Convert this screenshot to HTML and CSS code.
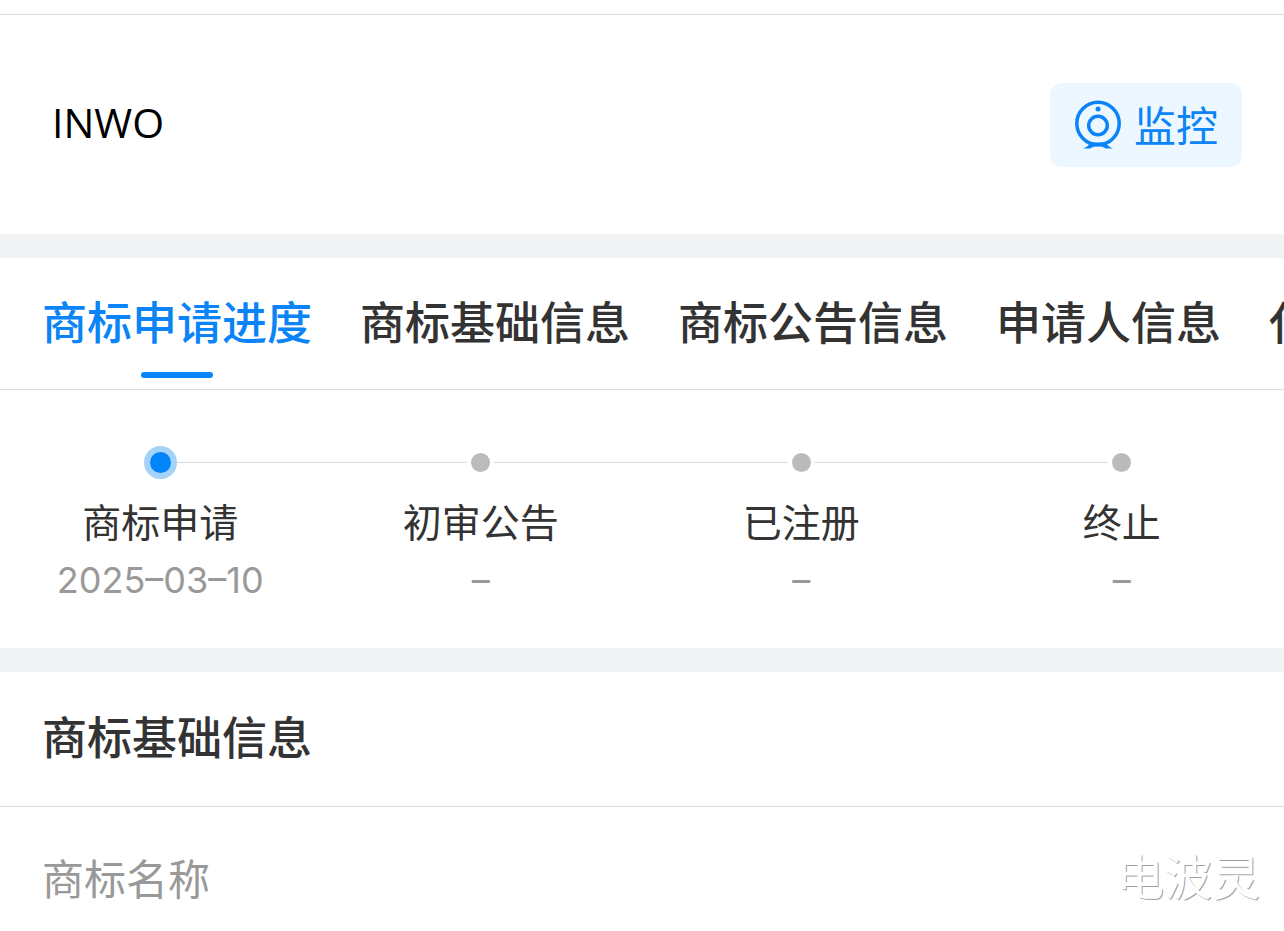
FILE: index.html
```html
<!DOCTYPE html>
<html lang="zh-CN">
<head>
    <meta charset="UTF-8">
    <meta name="viewport" content="width=device-width, initial-scale=1.0">
    <title>INWO</title>
    <link rel="stylesheet" href="styles.css">
</head>
<body>
<header class="brand">
    <h1 class="brand-name">INWO</h1>
    <button class="monitor-btn" type="button">
        <svg class="monitor-icon" viewBox="0 0 48 50" fill="none" stroke="currentColor" stroke-width="3.5" aria-hidden="true">
            <circle cx="24" cy="24.5" r="21.2"></circle>
            <circle cx="24" cy="26.5" r="9.3"></circle>
            <circle cx="24" cy="10" r="2.5" fill="currentColor" stroke="none"></circle>
            <path d="M9 49.5c3-1 6-3 7-6h16c1 3 4 5 7 6h-7c-5-3-11-3-16 0z" fill="currentColor" stroke="none"></path>
        </svg>
        <span>监控</span>
    </button>
</header>

<nav class="tabs">
    <a class="tab active" href="#progress">商标申请进度</a>
    <a class="tab" href="#basic">商标基础信息</a>
    <a class="tab" href="#notice">商标公告信息</a>
    <a class="tab" href="#applicant">申请人信息</a>
    <a class="tab" href="#agent">代理信息</a>
</nav>

<ol class="steps" id="progress">
    <li class="step current">
        <div class="rail"><span class="dot"></span></div>
        <span class="step-name">商标申请</span>
        <span class="step-date">2025–03–10</span>
    </li>
    <li class="step">
        <div class="rail"><span class="dot"></span></div>
        <span class="step-name">初审公告</span>
        <span class="step-date">–</span>
    </li>
    <li class="step">
        <div class="rail"><span class="dot"></span></div>
        <span class="step-name">已注册</span>
        <span class="step-date">–</span>
    </li>
    <li class="step">
        <div class="rail"><span class="dot"></span></div>
        <span class="step-name">终止</span>
        <span class="step-date">–</span>
    </li>
</ol>

<section class="info" id="basic">
    <h2 class="info-title">商标基础信息</h2>
    <div class="info-row">
        <span class="info-label">商标名称</span>
        <span class="watermark">电波灵</span>
    </div>
</section>
</body>
</html>
```
FILE: styles.css
```css
:root {
    --primary: #0a84f6;
    --primary-bg: #edf7ff;
    --text: #333333;
    --text-light: #999999;
    --line: #dcdcdc;
    --band: #f1f2f4;
}

* {
    margin: 0;
    padding: 0;
    box-sizing: border-box;
}

body {
    padding-top: 14px;
    background-color: #ffffff;
    color: var(--text);
    font-family: "Noto Sans CJK SC", sans-serif;
    overflow-x: hidden;
}

/* Header */
.brand {
    display: flex;
    align-items: center;
    justify-content: space-between;
    padding: 68px 42px 67px 52px;
    border-top: 1px solid var(--line);
}

.brand-name {
    padding-bottom: 6px;
    color: #000000;
    font-family: "Open Sans", sans-serif;
    font-size: 41px;
    font-weight: 400;
    line-height: 60px;
}

.monitor-btn {
    display: flex;
    align-items: center;
    gap: 12px;
    height: 84px;
    padding: 0 24px 2px;
    border: none;
    border-radius: 12px;
    background-color: var(--primary-bg);
    color: var(--primary);
    font-family: inherit;
    font-size: 42px;
    line-height: 60px;
    cursor: pointer;
}

.monitor-icon {
    width: 48px;
    height: 50px;
}

/* Tabs */
.tabs {
    display: flex;
    gap: 48px;
    padding: 0 42px;
    border-top: 24px solid var(--band);
    border-bottom: 1px solid var(--line);
    overflow: hidden;
}

.tab {
    display: flex;
    flex-direction: column;
    flex-shrink: 0;
    align-items: center;
    gap: 18px;
    padding: 30px 0 11px;
    color: var(--text);
    font-size: 45px;
    font-weight: 500;
    line-height: 66px;
    text-decoration: none;
    white-space: nowrap;
}

.tab::after {
    content: "";
    width: 72px;
    height: 6px;
    border-radius: 3px;
}

.tab.active {
    color: var(--primary);
}

.tab.active::after {
    background-color: var(--primary);
}

/* Progress steps */
.steps {
    display: grid;
    grid-template-columns: repeat(4, 1fr);
    padding: 56px 2px 37px 0;
    list-style: none;
}

.step {
    display: flex;
    flex-direction: column;
    align-items: center;
}

.rail {
    display: flex;
    align-items: center;
    gap: 4px;
    width: 100%;
    height: 33px;
    margin-bottom: 11px;
}

.rail::before,
.rail::after {
    content: "";
    flex: 1;
    height: 1px;
    background-color: var(--line);
}

.step:first-child .rail::before,
.step:last-child .rail::after {
    background-color: transparent;
}

.dot {
    width: 19px;
    height: 19px;
    border-radius: 50%;
    background-color: #bbbbbb;
}

.current .rail {
    gap: 0;
}

.current .dot {
    width: 33px;
    height: 33px;
    border: 6px solid #a5d2f8;
    background-color: #0086fa;
}

.step-name {
    font-size: 39px;
    line-height: 60px;
}

.step-date {
    color: var(--text-light);
    font-family: Inter, sans-serif;
    font-size: 36px;
    line-height: 61px;
}

/* Basic info */
.info {
    border-top: 24px solid var(--band);
}

.info-title {
    padding: 31px 42px 37px;
    border-bottom: 1px solid var(--line);
    font-size: 45px;
    font-weight: 500;
    line-height: 66px;
}

.info-row {
    display: flex;
    align-items: center;
    justify-content: space-between;
    padding: 37px 24px 24px 42px;
}

.info-label {
    color: var(--text-light);
    font-size: 42px;
    line-height: 66px;
}

.watermark {
    padding-bottom: 6px;
    color: #ffffff;
    font-size: 48px;
    line-height: 60px;
    text-shadow: 1px 1px 0 #a0a0a0;
}
```
